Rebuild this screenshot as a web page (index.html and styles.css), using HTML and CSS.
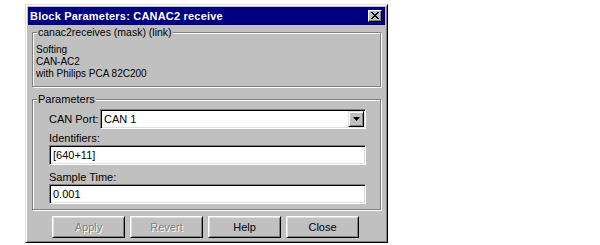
FILE: index.html
```html
<!DOCTYPE html>
<html>
<head>
<meta charset="utf-8">
<link rel="stylesheet" href="styles.css">
</head>
<body>
<div class="dialog">
  <div class="titlebar">
    <span class="title">Block Parameters: CANAC2 receive</span>
    <span class="close-btn">
      <svg width="8" height="7" viewBox="0 0 8 7"><path d="M0 0h2v1h1v1h2v-1h1v-1h2v1h-1v1h-1v1h-1v1h1v1h1v1h1v1h-2v-1h-1v-1h-2v1h-1v1h-2v-1h1v-1h1v-1h1v-1h-1v-1h-1v-1h-1z" fill="#000"/></svg>
    </span>
  </div>
  <div class="group group-mask">
    <span class="legend">canac2receives (mask) (link)</span>
    <div class="desc">Softing</div>
    <div class="desc">CAN-AC2</div>
    <div class="desc">with Philips PCA 82C200</div>
  </div>
  <div class="group group-params">
    <span class="legend">Parameters</span>
    <div class="row">
      <span class="label">CAN Port:</span>
      <div class="field combo">
        <span class="value">CAN 1</span>
        <span class="combo-btn">
          <svg width="7" height="4" viewBox="0 0 7 4"><path d="M0 0h7l-3.5 4z" fill="#000"/></svg>
        </span>
      </div>
    </div>
    <div class="label block-label first">Identifiers:</div>
    <div class="field"><span class="value">[640+11]</span></div>
    <div class="label block-label">Sample Time:</div>
    <div class="field"><span class="value">0.001</span></div>
  </div>
  <div class="buttons">
    <div class="btn disabled">Apply</div>
    <div class="btn disabled">Revert</div>
    <div class="btn">Help</div>
    <div class="btn">Close</div>
  </div>
</div>
</body>
</html>
```
FILE: styles.css
```css
html, body {
  margin: 0;
  padding: 0;
  background: #ffffff;
}
body {
  font-family: "Liberation Sans", Arial, sans-serif;
  font-size: 11px;
  color: #000;
}
.dialog {
  margin: 4px 0 0 25px;
  width: 363px;
  height: 239px;
  box-sizing: border-box;
  background: #c0c0c0;
  border: 1px solid;
  border-color: #dfdfdf #000 #000 #dfdfdf;
  box-shadow: inset 1px 1px #fff, inset -1px -1px #808080;
  padding: 2px;
  display: flex;
  flex-direction: column;
}
.titlebar {
  height: 18px;
  background: #000080;
  display: flex;
  align-items: center;
  justify-content: space-between;
  padding: 0 3px 0 2px;
}
.title {
  color: #fff;
  font-weight: bold;
  font-size: 11px;
  letter-spacing: 0.2px;
}
.close-btn {
  width: 14px;
  height: 12px;
  box-sizing: border-box;
  background: #c0c0c0;
  border: 1px solid;
  border-color: #fff #000 #000 #fff;
  box-shadow: inset -1px -1px #808080;
  display: flex;
  align-items: center;
  justify-content: center;
  padding: 0 1px 1px 0;
}
.group {
  position: relative;
  margin: 0 4px;
  border: 1px solid #808080;
  box-shadow: inset 1px 1px #fff, 1px 1px #fff;
}
.legend {
  position: absolute;
  top: -7px;
  left: 4px;
  background: #c0c0c0;
  padding: 0 1px;
  line-height: 13px;
}
.group-mask .legend {
  font-size: 10.5px;
}
.group-mask {
  margin-top: 7px;
  padding: 11px 3px 6px;
  height: 36px;
}
.desc {
  line-height: 12px;
  font-size: 10px;
}
.group-params {
  margin-top: 12px;
  padding: 9px 14px 0 16px;
  height: 100px;
}
.row {
  display: flex;
  align-items: center;
}
.row .label {
  width: 51px;
  flex: none;
}
.row .field {
  flex: 1;
}
.block-label {
  line-height: 13px;
  margin-top: 3px;
}
.block-label.first {
  margin-top: 3px;
}
.field {
  height: 20px;
  box-sizing: border-box;
  background: #fff;
  border: 1px solid;
  border-color: #808080 #fff #fff #808080;
  box-shadow: inset 1px 1px #000, inset -1px -1px #dfdfdf;
  display: flex;
  align-items: center;
  padding: 0 2px 0 3px;
}
.field + .block-label {
  margin-top: 6px;
}
.value {
  flex: 1;
}
.combo {
  padding-right: 1px;
}
.combo-btn {
  width: 16px;
  height: 16px;
  box-sizing: border-box;
  background: #c0c0c0;
  border: 1px solid;
  border-color: #dfdfdf #000 #000 #dfdfdf;
  box-shadow: inset 1px 1px #fff, inset -1px -1px #808080;
  display: flex;
  align-items: center;
  justify-content: center;
}
.buttons {
  display: flex;
  gap: 5px;
  margin-top: 6px;
  padding-left: 24px;
}
.btn {
  width: 73px;
  height: 22px;
  box-sizing: border-box;
  border: 1px solid;
  border-color: #fff #000 #000 #fff;
  box-shadow: inset 1px 1px #dfdfdf, inset -1px -1px #808080;
  display: flex;
  align-items: center;
  justify-content: center;
}
.btn.disabled {
  color: #808080;
  text-shadow: 1px 1px #fff;
}
```
